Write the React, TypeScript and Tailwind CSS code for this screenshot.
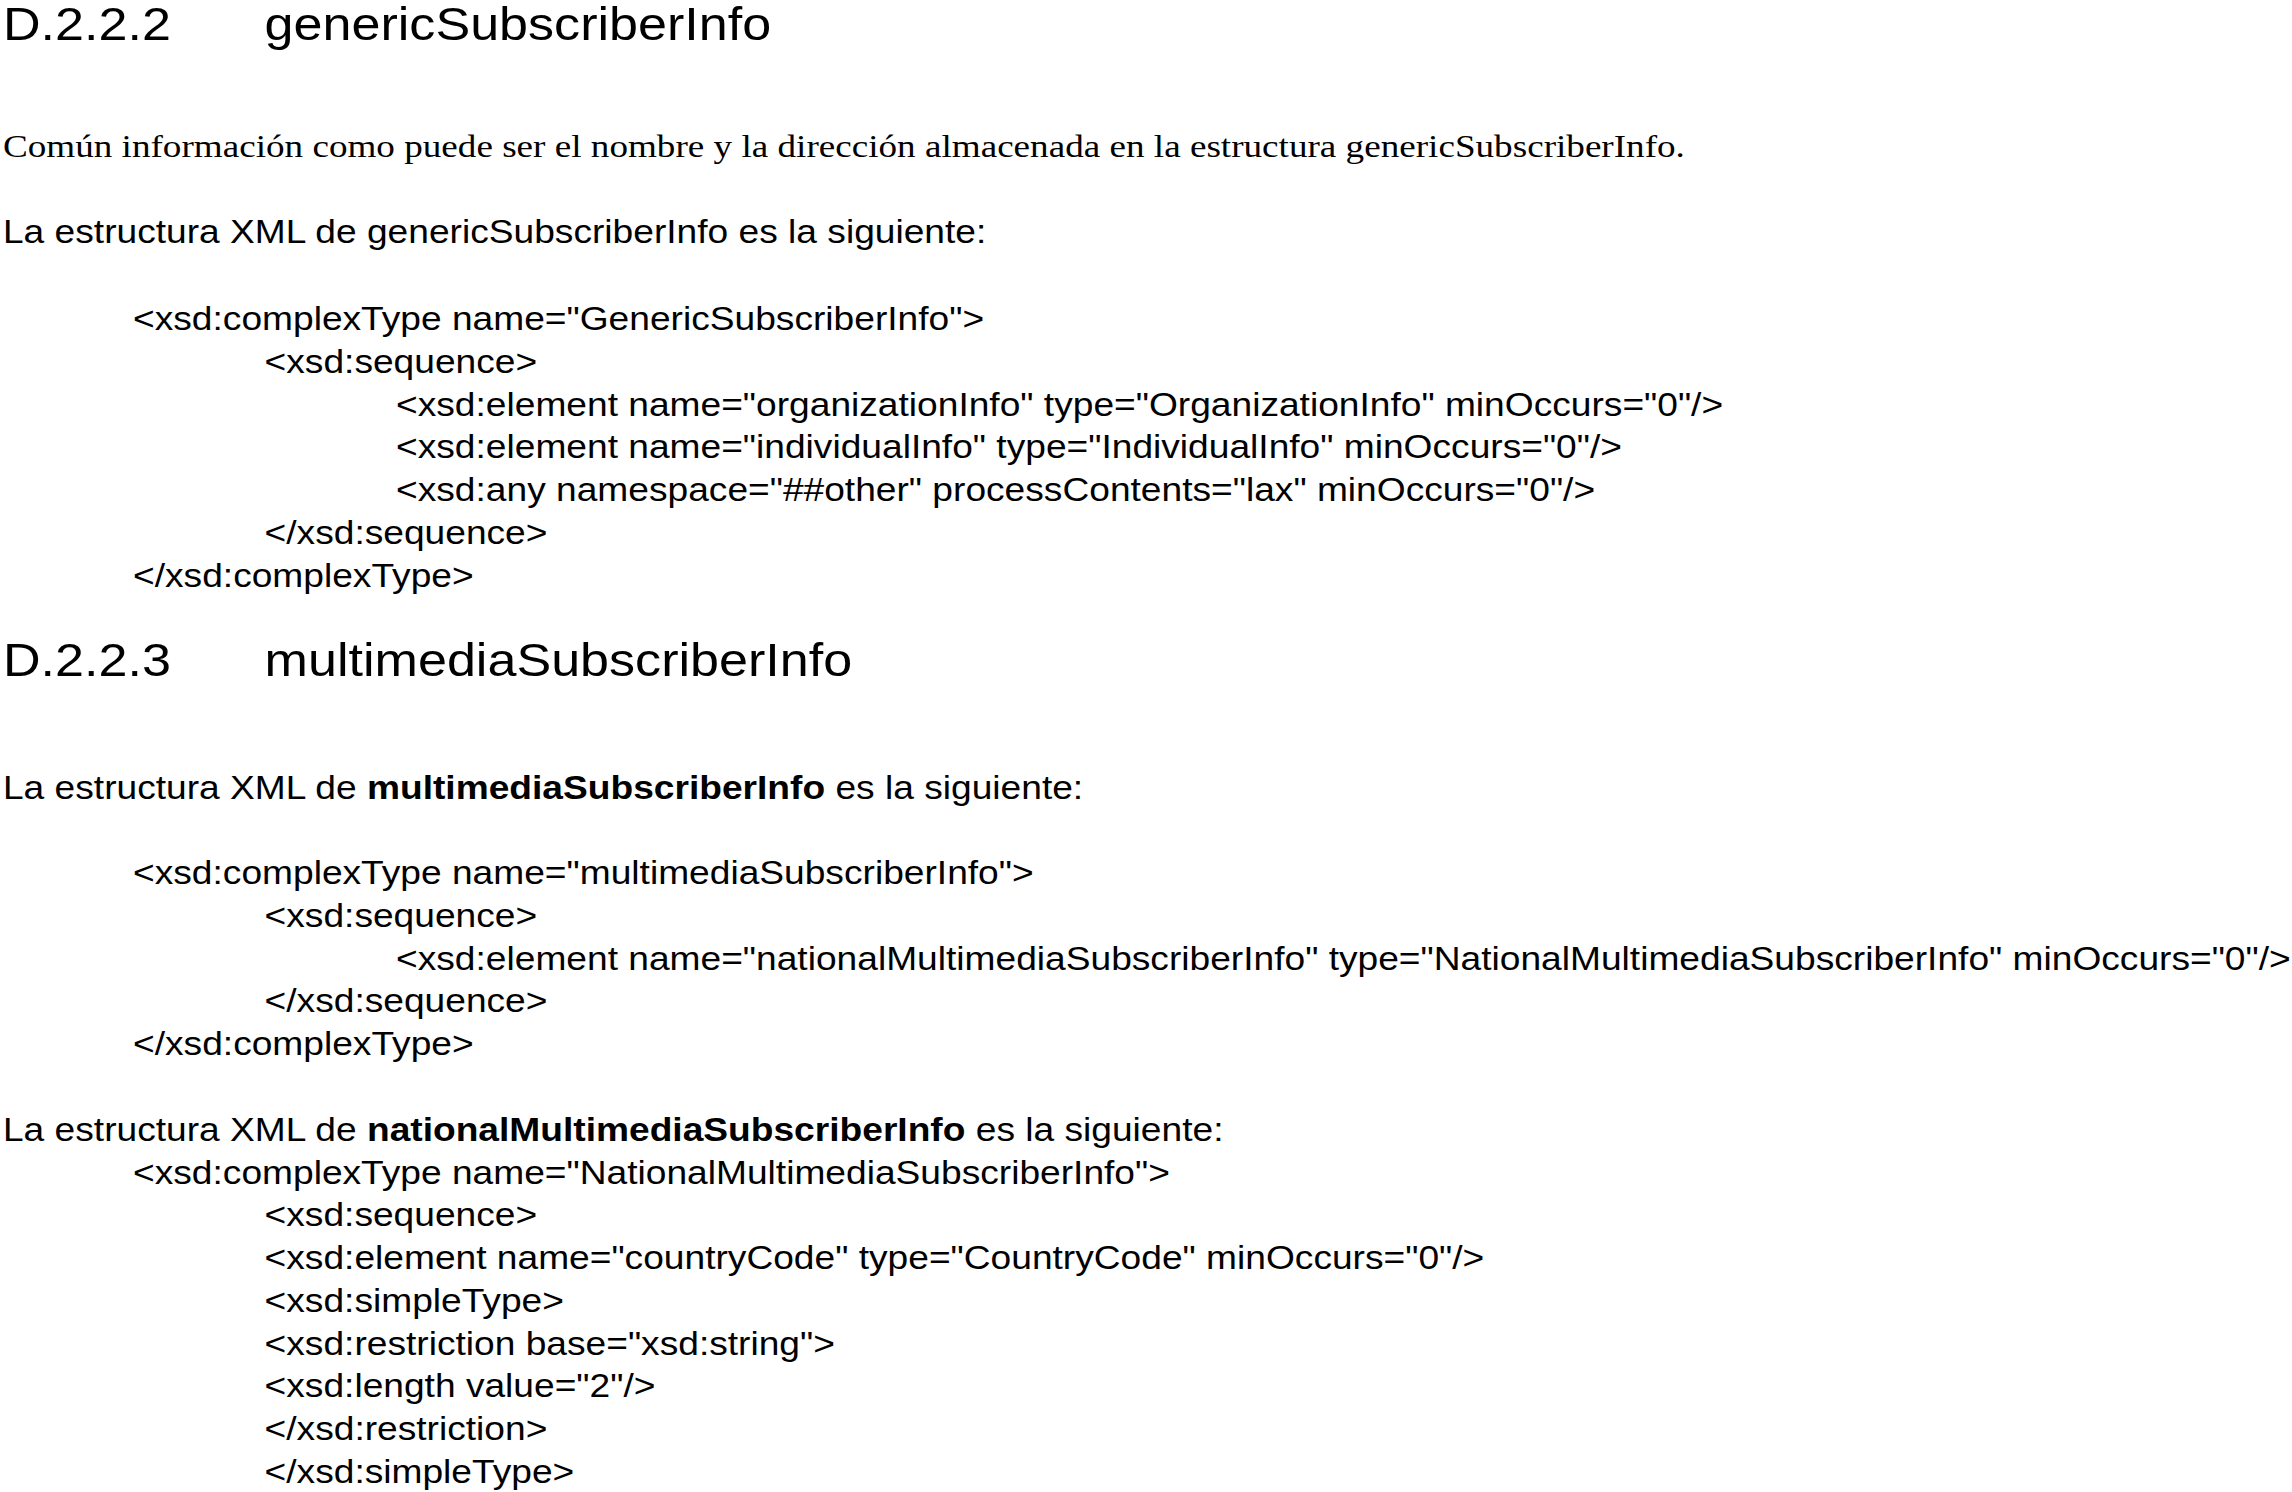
const indents = ['pl-0', 'pl-[114.1px]', 'pl-[229.5px]', 'pl-[344.8px]'];

type CodeLine = [number, string];

const genericXsd: CodeLine[] = [
  [1, '<xsd:complexType name="GenericSubscriberInfo">'],
  [2, '<xsd:sequence>'],
  [3, '<xsd:element name="organizationInfo" type="OrganizationInfo" minOccurs="0"/>'],
  [3, '<xsd:element name="individualInfo" type="IndividualInfo" minOccurs="0"/>'],
  [3, '<xsd:any namespace="##other" processContents="lax" minOccurs="0"/>'],
  [2, '</xsd:sequence>'],
  [1, '</xsd:complexType>']
];

const multimediaXsd: CodeLine[] = [
  [1, '<xsd:complexType name="multimediaSubscriberInfo">'],
  [2, '<xsd:sequence>'],
  [3, '<xsd:element name="nationalMultimediaSubscriberInfo" type="NationalMultimediaSubscriberInfo" minOccurs="0"/>'],
  [2, '</xsd:sequence>'],
  [1, '</xsd:complexType>']
];

const nationalXsd: CodeLine[] = [
  [1, '<xsd:complexType name="NationalMultimediaSubscriberInfo">'],
  [2, '<xsd:sequence>'],
  [2, '<xsd:element name="countryCode" type="CountryCode" minOccurs="0"/>'],
  [2, '<xsd:simpleType>'],
  [2, '<xsd:restriction base="xsd:string">'],
  [2, '<xsd:length value="2"/>'],
  [2, '</xsd:restriction>'],
  [2, '</xsd:simpleType>']
];

const Heading = ({ num, title, className = '' }: { num: string; title: string; className?: string }) => (
  <div className={`flex text-[45.7px] leading-[44px] ${className}`}>
    <span className="w-[229.5px] shrink-0">{num}</span>
    <span>{title}</span>
  </div>
);

const CodeBlock = ({ lines, className = '' }: { lines: CodeLine[]; className?: string }) => (
  <div className={className}>
    {lines.map(([level, text], i) => (
      <div key={i} className={`h-[42.75px] leading-[42.75px] ${indents[level]}`}>
        {text}
      </div>
    ))}
  </div>
);

export default function App() {
  return (
    <div className="w-[2292px] h-[1492px] overflow-hidden bg-white text-black">
      {/* the source page is stretched sideways a little, hence the scale */}
      <div
        className="w-[2010px] origin-top-left scale-x-[1.14] pt-[3px] pl-[2.6px] whitespace-pre text-[32.6px]"
        style={{ fontFamily: '"Liberation Sans", Arial, sans-serif' }}
      >
        <Heading num="D.2.2.2" title="genericSubscriberInfo" />

        <p
          className="mt-[77.6px] h-[42.75px] leading-[42.75px]"
          style={{ fontFamily: '"Liberation Serif", "Times New Roman", serif' }}
        >
          Común información como puede ser el nombre y la dirección almacenada en la estructura genericSubscriberInfo.
        </p>

        <p className="mt-[43.5px] h-[42.75px] leading-[42.75px]">
          La estructura XML de genericSubscriberInfo es la siguiente:
        </p>

        <CodeBlock lines={genericXsd} className="mt-[44.5px]" />

        <Heading num="D.2.2.3" title="multimediaSubscriberInfo" className="mt-[41.9px]" />

        <p className="mt-[83.7px] h-[42.75px] leading-[42.75px]">
          La estructura XML de <b className="font-bold">multimediaSubscriberInfo</b> es la siguiente:
        </p>

        <CodeBlock lines={multimediaXsd} className="mt-[42.5px]" />

        <p className="mt-[43px] h-[42.75px] leading-[42.75px]">
          La estructura XML de <b className="font-bold">nationalMultimediaSubscriberInfo</b> es la siguiente:
        </p>

        <CodeBlock lines={nationalXsd} />
      </div>
    </div>
  );
}
